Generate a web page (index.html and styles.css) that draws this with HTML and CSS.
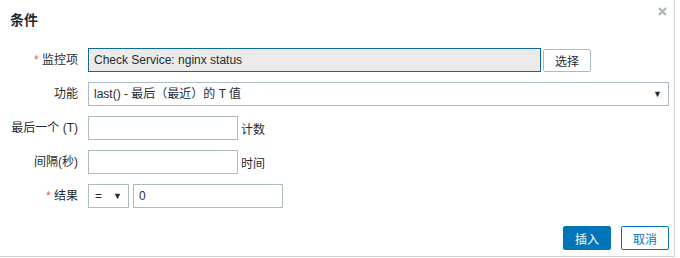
FILE: index.html
```html
<!DOCTYPE html>
<html>
<head>
<meta charset="utf-8">
<link rel="stylesheet" href="styles.css">
</head>
<body>
<div class="dialog">
  <div class="header">
    <h4 class="title">条件</h4>
    <button class="close" aria-label="close">
      <svg width="9" height="9" viewBox="0 0 9 9"><path d="M1 1L8 8M8 1L1 8" stroke="#aab4ba" stroke-width="2.2"/></svg>
    </button>
  </div>
  <div class="form">
    <label class="label"><span class="req">*</span> 监控项</label>
    <div class="field">
      <div class="input wide readonly">Check Service: nginx status</div>
      <button class="btn-alt">选择</button>
    </div>

    <label class="label">功能</label>
    <div class="field">
      <div class="select full">last() - 最后（最近）的 T 值<span class="arrow">▼</span></div>
    </div>

    <label class="label">最后一个 (T)</label>
    <div class="field">
      <div class="input small"></div>
      <span class="unit">计数</span>
    </div>

    <label class="label">间隔(秒)</label>
    <div class="field">
      <div class="input small"></div>
      <span class="unit">时间</span>
    </div>

    <label class="label"><span class="req">*</span> 结果</label>
    <div class="field tight">
      <div class="select op">=<span class="arrow">▼</span></div>
      <div class="input small">0</div>
    </div>
  </div>
  <div class="footer">
    <button class="btn-main">插入</button>
    <button class="btn-cancel">取消</button>
  </div>
</div>
</body>
</html>
```
FILE: styles.css
```css
* { box-sizing: border-box; }
html, body { margin: 0; padding: 0; background: #fff; }
body {
  font-family: "Liberation Sans", Arial, "Noto Sans CJK SC", sans-serif;
  font-size: 12px;
  color: #1f2c33;
}
.dialog {
  width: 675px;
  height: 257px;
  border-right: 1px solid #cdd4d8;
  border-bottom: 1px solid #cdd4d8;
  position: relative;
}
.header {
  height: 48px;
  padding: 11px 10px 0 10px;
}
.title {
  margin: 0;
  font-size: 14px;
  font-weight: bold;
  line-height: 18px;
  color: #1f2c33;
}
.close {
  position: absolute;
  top: 6px;
  right: 6px;
  border: 0;
  background: none;
  padding: 0;
  width: 11px;
  height: 11px;
  display: flex;
  align-items: center;
  justify-content: center;
}
.form {
  display: grid;
  grid-template-columns: 78px 1fr;
  column-gap: 10px;
  row-gap: 10px;
  padding-right: 6px;
}
.label {
  text-align: right;
  line-height: 24px;
  white-space: nowrap;
}
.req { color: #e45959; }
.field {
  display: flex;
  align-items: center;
  gap: 5px;
  height: 24px;
}
.field.tight { gap: 4px; }
.input, .select {
  height: 24px;
  border: 1px solid #acbbc2;
  background: #fff;
  line-height: 22px;
  padding: 0 5px;
  white-space: nowrap;
}
.input.wide { width: 453px; }
.input.readonly { background: #ebebeb; border-color: #0b6aa1; }
.input.small { width: 150px; }
.unit { margin-left: -2px; }
.select { position: relative; }
.select.full { width: 581px; }
.select.op { width: 41px; padding-left: 6px; }
.arrow {
  position: absolute;
  right: 6px;
  top: 0;
  font-size: 9px;
  color: #1f2c33;
}
.btn-alt {
  height: 23px;
  width: 48px;
  margin-left: -3px;
  border: 1px solid #acbbc2;
  border-radius: 2px;
  background: #fff;
  color: #1f2c33;
  font: inherit;
  padding: 0;
}
.footer {
  display: flex;
  justify-content: flex-end;
  gap: 10px;
  padding: 18px 5px 0 0;
}
.btn-main, .btn-cancel {
  height: 24px;
  width: 48px;
  border-radius: 2px;
  font: inherit;
  padding: 0;
}
.btn-main {
  background: #0275b8;
  border: 1px solid #0275b8;
  color: #fff;
}
.btn-cancel {
  background: #fff;
  border: 1px solid #0275b8;
  color: #0275b8;
}
```
